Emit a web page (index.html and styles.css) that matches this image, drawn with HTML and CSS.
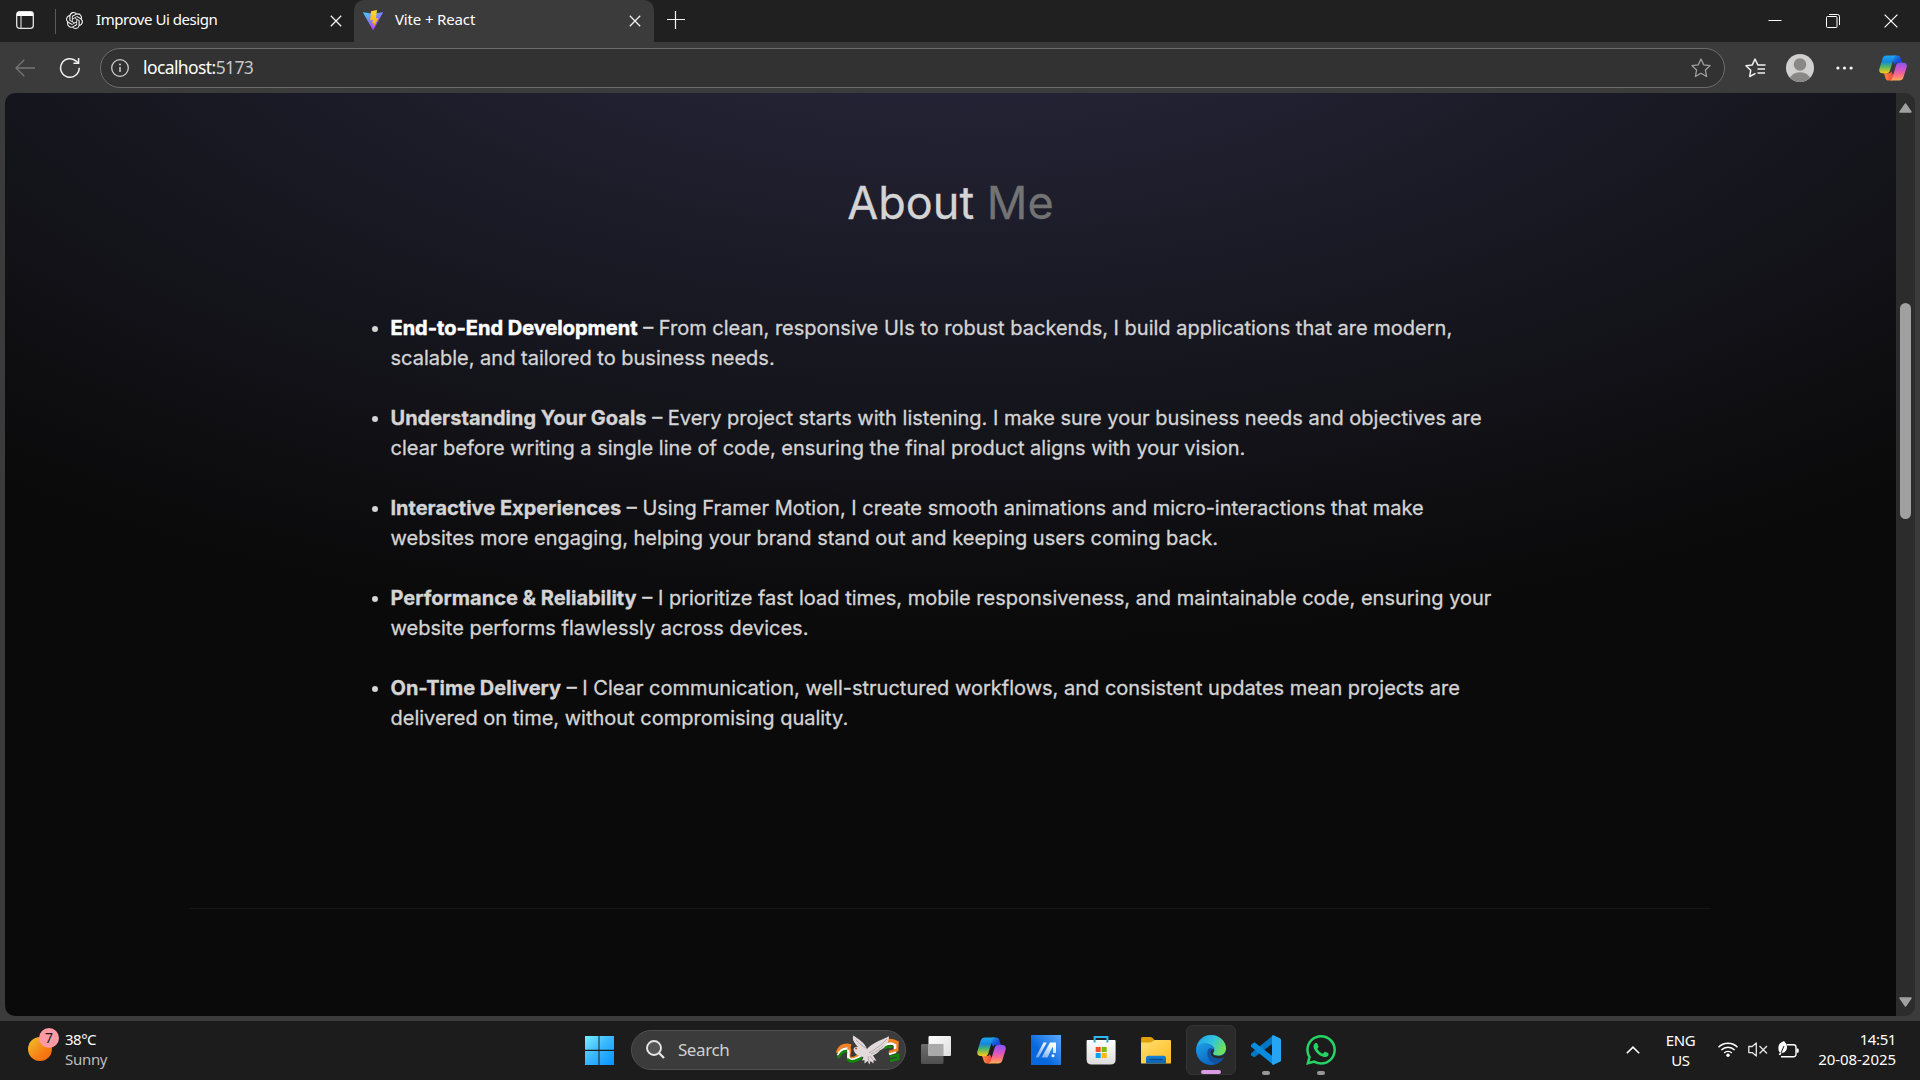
FILE: index.html
```html
<!DOCTYPE html>
<html lang="en">
<head>
<meta charset="utf-8">
<title>Vite + React</title>
<link rel="stylesheet" href="styles.css">
</head>
<body>
<svg class="defs" width="0" height="0" aria-hidden="true">
  <defs>
    <linearGradient id="cp-left" x1="0" y1="0" x2="0" y2="1"><stop offset="0" stop-color="#1ba8f0"/><stop offset=".35" stop-color="#1487dc"/><stop offset=".62" stop-color="#4fb56a"/><stop offset="1" stop-color="#ffcb12"/></linearGradient>
    <linearGradient id="cp-top" x1="0" y1="0" x2="1" y2="1"><stop offset="0" stop-color="#1f9df0"/><stop offset=".6" stop-color="#1749d6"/><stop offset="1" stop-color="#2a5be8"/></linearGradient>
    <linearGradient id="cp-right" x1="0" y1="0" x2="0" y2="1"><stop offset="0" stop-color="#8a55f0"/><stop offset=".4" stop-color="#d354c8"/><stop offset=".7" stop-color="#fb6f80"/><stop offset="1" stop-color="#ffae55"/></linearGradient>
    <linearGradient id="cp-bot" x1="0" y1="0" x2="1" y2="0"><stop offset="0" stop-color="#ff9b3d"/><stop offset="1" stop-color="#ee3f3f"/></linearGradient>
    <symbol id="copilot" viewBox="0 0 28 26">
      <path d="M15 .5h3.400c1.800 0 2.700 1 3.200 2.600L22.600 6.500c.3.900 1 1.200 2 1.200h-6.200c-1.500 0-2.300.7-2.700 2L13 4z" fill="url(#cp-top)"/>
      <path d="M13 25.500H9.600c-1.800 0-2.700-1-3.200-2.600L5.400 19.500c-.3-.9-1-1.200-2-1.200h6.200c1.500 0 2.300-.7 2.700-2L15 22z" fill="url(#cp-bot)"/>
      <path d="M7.800.5h9.400c-1.500.3-2.100 1.400-2.600 3l-3.700 12.300c-.5 1.600-1.400 2.500-3.100 2.500H3.500C.8 18.300-.3 16.300.4 13.800L3.500 3.700C4.200 1.600 5.500.5 7.800.5z" fill="url(#cp-left)"/>
      <path d="M20.200 25.500h-9.400c1.500-.3 2.100-1.400 2.600-3l3.700-12.300c.5-1.600 1.400-2.500 3.100-2.500h4.300c2.700 0 3.800 2 3.100 4.500l-3.100 10.100c-.7 2.100-2 3.200-4.300 3.200z" fill="url(#cp-right)"/>
    </symbol>
  </defs>
</svg>

<div class="desktop">
  <header class="tabbar">
    <div class="workspace">
      <svg width="18" height="18" viewBox="0 0 18 18"><rect x=".7" y=".7" width="16.600" height="16.600" rx="2.800" fill="none" stroke="#e4e4e4" stroke-width="1.300"/><path d="M1 5V3a2 2 0 0 1 2-2h12a2 2 0 0 1 2 2v2z" fill="#fff"/><path d="M5 5v12" stroke="#cfcfcf" stroke-width="1.200"/></svg>
    </div>
    <div class="tab">
      <svg class="favicon-ai" width="17" height="17" viewBox="0 0 24 24" fill="#f2f2f2"><path d="M22.2819 9.8211a5.9847 5.9847 0 0 0-.5157-4.9108 6.0462 6.0462 0 0 0-6.5098-2.9A6.0651 6.0651 0 0 0 4.9807 4.1818a5.9847 5.9847 0 0 0-3.9977 2.9 6.0462 6.0462 0 0 0 .7427 7.0966 5.98 5.98 0 0 0 .511 4.9107 6.051 6.051 0 0 0 6.5146 2.9001A5.9847 5.9847 0 0 0 13.2599 24a6.0557 6.0557 0 0 0 5.7718-4.2058 5.9894 5.9894 0 0 0 3.9977-2.9001 6.0557 6.0557 0 0 0-.7475-7.0729zm-9.022 12.6081a4.4755 4.4755 0 0 1-2.8764-1.0408l.1419-.0804 4.7783-2.7582a.7948.7948 0 0 0 .3927-.6813v-6.7369l2.02 1.1686a.071.071 0 0 1 .038.052v5.5826a4.504 4.504 0 0 1-4.4945 4.4944zm-9.6607-4.1254a4.4708 4.4708 0 0 1-.5346-3.0137l.142.0852 4.783 2.7582a.7712.7712 0 0 0 .7806 0l5.8428-3.3685v2.3324a.0804.0804 0 0 1-.0332.0615L9.74 19.9502a4.4992 4.4992 0 0 1-6.1408-1.6464zM2.3408 7.8956a4.485 4.485 0 0 1 2.3655-1.9728V11.6a.7664.7664 0 0 0 .3879.6765l5.8144 3.3543-2.0201 1.1685a.0757.0757 0 0 1-.071 0l-4.8303-2.7865A4.504 4.504 0 0 1 2.3408 7.872zm16.5963 3.8558L13.1038 8.364 15.1192 7.2a.0757.0757 0 0 1 .071 0l4.8303 2.7913a4.4944 4.4944 0 0 1-.6765 8.1042v-5.6772a.79.79 0 0 0-.407-.667zm2.0107-3.0231l-.142-.0852-4.7735-2.7818a.7759.7759 0 0 0-.7854 0L9.409 9.2297V6.8974a.0662.0662 0 0 1 .0284-.0615l4.8303-2.7866a4.4992 4.4992 0 0 1 6.6802 4.66zM8.3065 12.863l-2.02-1.1638a.0804.0804 0 0 1-.038-.0567V6.0742a4.4992 4.4992 0 0 1 7.3757-3.4537l-.142.0805L8.704 5.459a.7948.7948 0 0 0-.3927.6813zm1.0976-2.3654l2.602-1.4998 2.6069 1.4998v2.9994l-2.5974 1.4997-2.6067-1.4997Z"/></svg>
      <span class="tab-title">Improve Ui design</span>
      <svg class="tab-close" width="12" height="12" viewBox="0 0 12 12"><path d="M.8.8l10.400 10.400M11.200.8L.8 11.200" stroke="#f0f0f0" stroke-width="1.300"/></svg>
    </div>
    <div class="tab tab-active">
      <svg class="favicon-vite" width="20" height="20" viewBox="0 0 20 20">
        <defs><linearGradient id="v1" x1="0" y1="0" x2=".6" y2="1"><stop offset="0" stop-color="#41d1ff"/><stop offset="1" stop-color="#bd34fe"/></linearGradient><linearGradient id="v2" x1="0" y1="0" x2="0" y2="1"><stop offset="0" stop-color="#ffdd35"/><stop offset="1" stop-color="#ffa800"/></linearGradient></defs>
        <path d="M.3 2.200l9.500 1.500 9.900-1.500c.3 0 .4.300.2.600L10.400 19.700c-.2.300-.5.300-.7 0L.1 2.800c-.2-.3 0-.6.2-.6z" fill="url(#v1)"/><path d="M14 .1L8 1.300l-.8 9 2.700-.5-.8 3.700 2-.6-.8 4.500 5.100-9.300-2.500.4z" fill="url(#v2)"/></svg>
      <span class="tab-title title-vite">Vite + React</span>
      <svg class="tab-close" width="12" height="12" viewBox="0 0 12 12"><path d="M.8.8l10.400 10.400M11.200.8L.8 11.200" stroke="#f0f0f0" stroke-width="1.300"/></svg>
    </div>
    <svg class="new-tab" width="18" height="18" viewBox="0 0 18 18"><path d="M0 8.500h18M8.500 0v18" stroke="#f4f4f4" stroke-width="1.200"/></svg>
    <div class="window-controls">
      <svg width="14" height="14" viewBox="0 0 14 14"><path d="M.5 6.500h13" stroke="#fff"/></svg>
      <svg width="14" height="14" viewBox="0 0 14 14" fill="none" stroke="#fff"><rect x=".5" y="2.500" width="10.500" height="11" rx="1"/><path d="M3 .5h8.500a2 2 0 0 1 2 2V11"/></svg>
      <svg width="14" height="14" viewBox="0 0 14 14"><path d="M.6.6l12.800 12.800M13.400.6L.6 13.400" stroke="#fff" stroke-width="1.200"/></svg>
    </div>
  </header>

  <div class="toolbar">
    <svg class="back" width="20" height="18" viewBox="0 0 20 18" fill="none" stroke="#757575" stroke-width="1.300"><path d="M20 9H1M9.300.8L1 9l8.300 8.200"/></svg>
    <svg class="reload" width="22" height="22" viewBox="0 0 22 22" fill="none" stroke="#f1f1f1" stroke-width="1.500"><path d="M20.200 10.800a9.300 9.300 0 1 1-2.700-6.400L19.500 6"/><path d="M19.600 1v5.200h-5.200"/></svg>
    <div class="address">
      <svg width="18" height="18" viewBox="0 0 18 18"><circle cx="9" cy="9" r="8.300" fill="none" stroke="#cfcfcf" stroke-width="1.300"/><path d="M9 8v5" stroke="#cfcfcf" stroke-width="1.500"/><circle cx="9" cy="5.500" r="1" fill="#cfcfcf"/></svg>
      <span class="url">localhost:<span class="port">5173</span></span>
      <svg class="star" width="20" height="20" viewBox="0 0 20 20"><path d="M10 1l2.700 5.800 6.400.8-4.700 4.400 1.200 6.500L10 15.300l-5.600 3.200L5.600 12 .9 7.600l6.400-.8z" fill="none" stroke="#a0a0a0" stroke-width="1.300" stroke-linejoin="round"/></svg>
    </div>
    <svg class="favorites" width="21" height="20" viewBox="0 0 21 20" fill="none" stroke="#f1f1f1" stroke-width="1.500"><path d="M10.500 15.400l-5.800 3.100 1-6.200L1 7.700l6.300-.8L10 1l2.800 5.900h7.700M12.500 11H20M12.500 15H20" stroke-linejoin="round"/></svg>
    <svg class="avatar" width="28" height="28" viewBox="0 0 28 28"><defs><clipPath id="av"><circle cx="14" cy="14" r="14"/></clipPath></defs><g clip-path="url(#av)"><path fill="#d2d0ce" d="M0 0h28v28H0z"/><circle cx="14" cy="10.500" r="6.200" fill="#8a8886"/><ellipse cx="14" cy="25.500" rx="10" ry="7.300" fill="#8a8886"/></g></svg>
    <svg class="more" width="17" height="4" viewBox="0 0 17 4" fill="#f5f5f5"><circle cx="1.900" cy="2" r="1.600"/><circle cx="8.500" cy="2" r="1.600"/><circle cx="15.100" cy="2" r="1.600"/></svg>
    <svg class="copilot-btn" width="28" height="26"><use href="#copilot"/></svg>
  </div>

  <div class="frame">
    <div class="viewport">
      <main class="page">
        <section class="about">
          <h1>About <span>Me</span></h1>
          <ul>
            <li class="lit"><strong>End-to-End Development</strong> – From clean, responsive UIs to robust backends, I build applications that are modern,<br>scalable, and tailored to business needs.</li>
            <li><strong>Understanding Your Goals</strong> – Every project starts with listening. I make sure your business needs and objectives are<br>clear before writing a single line of code, ensuring the final product aligns with your vision.</li>
            <li><strong>Interactive Experiences</strong> – Using Framer Motion, I create smooth animations and micro-interactions that make<br>websites more engaging, helping your brand stand out and keeping users coming back.</li>
            <li><strong>Performance &amp; Reliability</strong> – I prioritize fast load times, mobile responsiveness, and maintainable code, ensuring your<br>website performs flawlessly across devices.</li>
            <li><strong>On-Time Delivery</strong> – I Clear communication, well-structured workflows, and consistent updates mean projects are<br>delivered on time, without compromising quality.</li>
          </ul>
        </section>
      </main>
      <div class="scrollbar">
        <svg width="13" height="10" viewBox="0 0 13 10"><path d="M6.500 1L12 9H1z" fill="#a0a0a0" stroke="#a0a0a0" stroke-width="1.500" stroke-linejoin="round"/></svg>
        <div class="thumb"></div>
        <svg width="13" height="10" viewBox="0 0 13 10"><path d="M6.500 9L12 1H1z" fill="#a0a0a0" stroke="#a0a0a0" stroke-width="1.500" stroke-linejoin="round"/></svg>
      </div>
    </div>
  </div>

  <footer class="taskbar">
    <div class="weather">
      <div class="sun"><span class="badge">7</span></div>
      <div class="weather-text"><span>38°C</span><span class="dim">Sunny</span></div>
    </div>
    <div class="apps">
      <div class="slot">
        <svg width="30" height="30" viewBox="0 0 30 30"><defs><linearGradient id="win" gradientUnits="userSpaceOnUse" x1="0" y1="0" x2="29" y2="29"><stop offset="0" stop-color="#7cf3ff"/><stop offset=".5" stop-color="#38b9ff"/><stop offset="1" stop-color="#0a94ff"/></linearGradient></defs><path fill="url(#win)" d="M1 1h13.500v13.800H1zM15.500 1H30v13.800H15.500zM1 15.900h13.500V30H1zM15.500 15.900H30V30H15.500z"/></svg>
      </div>
      <div class="search">
        <svg width="19" height="19" viewBox="0 0 19 19" fill="none" stroke="#e6e6e6" stroke-width="1.900"><circle cx="8" cy="8" r="7" fill="#555"/><path d="M13 13l5 5" stroke-width="2.300"/></svg>
        <span>Search</span>
        <svg class="dove" width="64" height="30" viewBox="0 0 64 30">
          <g fill="none">
            <path d="M1.500 18C4 10 9 9.500 15 11" stroke="#f58220" stroke-width="3.600"/><path d="M2 20.500C5 13.500 9 12.500 14 14" stroke="#fff" stroke-width="2.600"/><path d="M2 23C6 16 9 15.500 13 16.500" stroke="#138808" stroke-width="2.600"/>
            <path d="M12 12c5 4-2 9 2 11 4 1.500 8-2 11-4" stroke="#f58220" stroke-width="3"/><path d="M12 15c2 4-2 7 2 9.500 4 1 8-2 11-3" stroke="#fff" stroke-width="2.400"/><path d="M11.500 24c3 4.500 9 1.500 14-1" stroke="#138808" stroke-width="2.800"/>
            <path d="M47 8c4-3 9-3 14-.5l-.5 9" stroke="#f58220" stroke-width="3.500"/><path d="M48 11c4-3 8-3 11-1v7l-6 2" stroke="#fff" stroke-width="2.600"/><path d="M48 13c4-2 6-2 8-.500M54 22l8-2v4l-8 2" stroke="#138808" stroke-width="2.800"/><path d="M53 17l9-2.500" stroke="#f58220" stroke-width="2.500"/>
          </g>
          <path d="M17.500 14.500c.5-3 4-3.500 6-1.200C17.500 8 16 4 17.300.5c5 3.500 11.500 7 13.700 13.500C36 8 43 6 53 1.200c0 4-1 7-3.500 9 .5 1.500-3.500 4.500-5.500 5-2.500 3-4.500 4-7 5.300l3.500 5.500-3-1 0 3.500-3-2.500-1 3.500-2-3.500-3 2.500v-3.500l-2.500.5 1.500-3.500c-5-.5-9-3-10-7.500z" fill="#e2dada"/>
          <path d="M31 14c-4-3-8-5.500-11-9M33 18c6-4 12-7 18-14M35 19c5-2 9-5 12-8M32 21l1 6M34 21l3 4" stroke="#aaa2ad" stroke-width=".9" fill="none"/><circle cx="20" cy="13.500" r="1.100" fill="#c5541c"/>
        </svg>
      </div>
      <div class="slot">
        <svg width="30" height="30" viewBox="0 0 30 30"><defs><linearGradient id="tv1" x1="0" y1="0" x2="1" y2="1"><stop offset="0" stop-color="#fff"/><stop offset="1" stop-color="#ddd"/></linearGradient><linearGradient id="tv2" x1="0" y1="0" x2="0" y2="1"><stop offset="0" stop-color="#6e6e6e"/><stop offset="1" stop-color="#4f4f4f"/></linearGradient></defs><rect y="9" width="22.500" height="20" rx="1.200" fill="url(#tv2)"/><rect x="7.500" y="1" width="22.500" height="20" rx="1" fill="url(#tv1)"/><path d="M7.500 9h15v12h-15z" fill="#aaa"/></svg>
      </div>
      <div class="slot"><svg width="29" height="27"><use href="#copilot"/></svg></div>
      <div class="slot">
        <svg width="30" height="30" viewBox="0 0 30 30"><defs><linearGradient id="my" x1=".3" y1=".6" x2="1" y2="0"><stop offset="0" stop-color="#0867dd"/><stop offset="1" stop-color="#5baaff"/></linearGradient><linearGradient id="my2" x1="0" y1="1" x2=".6" y2="0"><stop offset="0" stop-color="#fff" stop-opacity=".35"/><stop offset="1" stop-color="#fff"/></linearGradient></defs><path fill="url(#my)" d="M0 0h30v30H0z"/><path fill="url(#my2)" d="M4.500 22.500L12.500 7.500h3.200L7.700 22.500zM10.500 22.500L19 7.500h6v10.500h-3v-6.500l-2.200 4-3.300 7z"/><circle cx="22" cy="20.800" r="1.500" fill="#fff"/></svg>
      </div>
      <div class="slot">
        <svg width="30" height="30" viewBox="0 0 30 30"><path d="M8.600 7V2h12.800v5" fill="none" stroke="#2fb9ee" stroke-width="2"/><defs><linearGradient id="st" x1="0" y1="0" x2="0" y2="1"><stop offset="0" stop-color="#fff"/><stop offset="1" stop-color="#dcdcdc"/></linearGradient></defs><path d="M.6 6q0-1 1-1h27q1 0 1 1v18.500q0 5-5 5h-19q-5 0-5-5z" fill="url(#st)"/><path d="M8.600 7.500V5M21.400 7.500V5" stroke="#2fa5dd" stroke-width="2"/><path fill="#f25022" d="M9.700 12h5v5h-5z"/><path fill="#7fba00" d="M15.700 12h5v5h-5z"/><path fill="#00a4ef" d="M9.700 18h5v5h-5z"/><path fill="#ffb900" d="M15.700 18h5v5h-5z"/></svg>
      </div>
      <div class="slot">
        <svg width="30" height="30" viewBox="0 0 30 30"><defs><linearGradient id="fo" x1="0" y1="0" x2="1" y2="1"><stop offset="0" stop-color="#ffdf74"/><stop offset="1" stop-color="#fdbb1d"/></linearGradient><linearGradient id="fb" x1="0" y1="0" x2="0" y2="1"><stop offset="0" stop-color="#1583d8"/><stop offset="1" stop-color="#0b60ae"/></linearGradient></defs><path d="M0 3.500Q0 2 1.500 2h8q1 0 1.800.8L13.500 5 10 9H0z" fill="#dfa00a"/><path d="M0 8.500q0-1 1-1h8.500q1 0 1.800-.8l1-.9q.8-.8 1.800-.8H29q1 0 1 1v22.500H0z" fill="url(#fo)"/><path d="M5 28.500V23q0-2.200 2.200-2.200h15.600Q25 20.800 25 23v5.500z" fill="url(#fb)"/><path d="M8.500 24.500h13" stroke="#0c4a87" stroke-width="1.200"/></svg>
      </div>
      <div class="slot">
        <div class="running">
        <svg width="30" height="30" viewBox="0 0 30 30"><defs><linearGradient id="e1" x1="0" y1=".2" x2="1" y2=".6"><stop offset="0" stop-color="#23a3e4"/><stop offset=".5" stop-color="#31c3df"/><stop offset="1" stop-color="#74e44f"/></linearGradient><linearGradient id="e2" x1="0" y1="0" x2=".5" y2="1"><stop offset="0" stop-color="#1f9fe6"/><stop offset="1" stop-color="#0a6ac4"/></linearGradient></defs>
        <circle cx="15" cy="15" r="14.900" fill="#0a6cc8"/><path d="M.4 13C1.500 5.500 7.500.1 15 .1 23.500.1 30 6.500 30 13.200c0 4.600-3.500 7.400-8 7.400-3.200 0-4.800-1-4.800-2 0-.9 1.300-1.400 1.300-3.600 0-3.400-4-6.500-9-6.500-4 0-7.300 1.700-9.100 4.500z" fill="url(#e1)"/><path d="M.3 13.200C2 9.500 6 7.700 10 8.300c4.300.5 7.500 3.500 7.500 6.500-2-3-6.500-1.500-6.500 4 0 5 3.600 9.300 8.500 10.200A15 15 0 0 1 .1 15z" fill="url(#e2)"/><path d="M14 12.800c-4 2.500-3.500 13.200 5 16.300 4-.8 7.500-3.500 9-6.600-4 2.500-12.700 1.900-14-3.500-.6-2.500.1-4.900 2.200-5.500z" fill="#11519d"/><path d="M17.700 14.500c.5 2-1.200 3-.8 4.200.5 1.700 3 2.200 5.500 2.200 3 0 5-1 7.600-4v12h-2l.5-6.600c-4 2.500-12.700 1.900-14-3.500-.6-2.500.7-5.100 3.200-4.300z" fill="#202020" class="edge-cut"/></svg>
        <i class="pill"></i></div>
      </div>
      <div class="slot with-dot">
        <svg width="30" height="30" viewBox="0 0 30 30"><path d="M22.500 0v8L3.500 22.200 0 20.600v-2.400z" fill="#0076c6"/><path d="M0 9.800l3.500-2.500L22.500 22v8L0 11.800z" fill="#0a8bdd"/><path d="M22 0l7 3.200q1 .5 1 1.600v20.400q0 1.100-1 1.600L22 30q-1-.6-1-2V2q0-1.400 1-2z" fill="#27a5f2"/></svg>
        <i class="dot"></i>
      </div>
      <div class="slot with-dot">
        <svg width="30" height="30" viewBox="0 0 24 24" fill="#25d366"><path d="M17.472 14.382c-.297-.149-1.758-.867-2.03-.967-.273-.099-.471-.148-.67.15-.197.297-.767.966-.94 1.164-.173.199-.347.223-.644.075-.297-.15-1.255-.463-2.39-1.475-.883-.788-1.48-1.761-1.653-2.059-.173-.297-.018-.458.13-.606.134-.133.298-.347.446-.52.149-.174.198-.298.298-.497.099-.198.05-.371-.025-.52-.075-.149-.669-1.612-.916-2.207-.242-.579-.487-.5-.669-.51-.173-.008-.371-.01-.57-.01-.198 0-.52.074-.792.372-.272.297-1.04 1.016-1.04 2.479 0 1.462 1.065 2.875 1.213 3.074.149.198 2.096 3.2 5.077 4.487.709.306 1.262.489 1.694.625.712.227 1.36.195 1.871.118.571-.085 1.758-.719 2.006-1.413.248-.694.248-1.289.173-1.413-.074-.124-.272-.198-.57-.347m-5.421 7.403h-.004a9.87 9.87 0 01-5.031-1.378l-.361-.214-3.741.982.998-3.648-.235-.374a9.86 9.86 0 01-1.51-5.26c.001-5.45 4.436-9.884 9.888-9.884 2.64 0 5.122 1.03 6.988 2.898a9.825 9.825 0 012.893 6.994c-.003 5.45-4.437 9.884-9.885 9.884m8.413-18.297A11.815 11.815 0 0012.05 0C5.495 0 .16 5.335.157 11.892c0 2.096.547 4.142 1.588 5.945L.057 24l6.305-1.654a11.882 11.882 0 005.683 1.448h.005c6.554 0 11.89-5.335 11.893-11.893a11.821 11.821 0 00-3.48-8.413Z"/></svg>
        <i class="dot"></i>
      </div>
    </div>
    <div class="tray">
      <svg class="chevron" width="14" height="8" viewBox="0 0 14 8"><path d="M.8 7.300L7 1.200l6.200 6.100" fill="none" stroke="#fff" stroke-width="1.600"/></svg>
      <div class="lang"><span>ENG</span><span>US</span></div>
      <div class="status">
      <svg width="20" height="15" viewBox="0 0 20 15" fill="none" stroke="#fff" stroke-width="1.400"><path d="M.5 5.300a13.300 13.300 0 0 1 19 0M3.300 8.100a9.400 9.400 0 0 1 13.400 0M6.200 10.900a5.400 5.400 0 0 1 7.600 0"/><circle cx="10" cy="13.200" r="1.700" fill="#fff" stroke="none"/></svg>
      <svg width="20" height="15" viewBox="0 0 20 15" fill="none" stroke="#e8e8e8" stroke-width="1.300"><path d="M8.300 1v13L4.200 10.600H.8V4.500h3.400zM11.500 4l7.500 7.500M19 4l-7.500 7.500" stroke-linejoin="round"/></svg>
      <svg width="21" height="17" viewBox="0 0 21 17"><path d="M9 3.700h6.500a2.500 2.500 0 0 1 2.500 2.500v7a2.500 2.500 0 0 1-2.500 2.500H3" fill="none" stroke="#fff" stroke-width="1.400"/><path d="M18.500 7.500h1.300q.9 0 .9 1v2.300q0 1-.9 1h-1.300zM6 0C1.500 1.800.3 4 .4 7.500c0 2 .8 3.500 1.600 4L.7 14h1.800l1-2c3.800 0 5.700-3 5.500-6.500C8.900 3 7.500 1.500 6 0z" fill="#fff"/><path d="M3 12l3-7" stroke="#1c1c1c"/></svg>
      </div>
      <div class="clock"><span>14:51</span><span class="date">20-08-2025</span></div>
    </div>
  </footer>
</div>
</body>
</html>
```
FILE: styles.css
```css
* { box-sizing: border-box; }
body { margin: 0; background: #3b3b3b; font-family: "Noto Sans", "Open Sans", sans-serif; color: #fff; overflow: hidden; }
svg { display: block; flex: none; }
.defs { position: absolute; }
.desktop { width: 1920px; height: 1080px; display: flex; flex-direction: column; }

.tabbar { height: 42px; flex: none; background: #202020; display: flex; align-items: stretch; }
.workspace { width: 56px; padding: 11px 0 0 16px; border-right: 1px solid #5b5b5b; height: 34px; clip-path: inset(9px 0 0 0); }
.tab { display: flex; align-items: center; width: 298px; padding: 0 12px 2px 10px; font-size: 15px; }
.tab-title { flex: 1; white-space: nowrap; letter-spacing: -.45px; line-height: 20px; margin-bottom: 2px; }
.title-vite { letter-spacing: -.15px; }
.favicon-ai { margin-right: 13px; }
.tab-active { width: 300px; background: #3b3b3b; border-radius: 10px 10px 0 0; padding: 0 13px 2px 9px; }
.favicon-vite { margin-right: 12px; }
.tab-close { margin-top: 2px; }
.new-tab { margin: 11px 0 0 13px; }
.window-controls { margin-left: auto; display: flex; gap: 44px; padding: 14px 22px 0 0; }

.toolbar { height: 51px; flex: none; display: flex; align-items: center; padding-left: 15px; }
.reload { margin-left: 24px; }
.address { margin: 0 0 0 19px; width: 1625px; height: 40px; border: 1px solid #6d6d6d; border-radius: 20px; background: #323232; display: flex; align-items: center; padding: 0 13px 0 10px; }
.url { margin: 0 0 2px 14px; font-size: 17.500px; flex: 1; letter-spacing: -.6px; line-height: 22px; }
.port { color: #c8c8c8; }
.favorites { margin-left: 20px; }
.avatar { margin-left: 20px; }
.more { margin-left: 22px; }
.copilot-btn { margin-left: 26px; }

.frame { height: 928px; flex: none; padding: 0 5px 5px; }
.viewport { height: 923px; display: flex; border-radius: 10px; overflow: hidden; }
.page { flex: 1; padding: 0 185px; background: radial-gradient(ellipse 80% 80% at 50% -20%, rgba(120, 119, 198, .3), rgba(255, 255, 255, 0)), #0a0a0a; }
.about { height: 816px; border-bottom: 1px solid #171717; font-family: Inter, sans-serif; color: #d4d4d4; }
h1 { margin: 0; padding-top: 85px; font-size: 45px; line-height: 50px; font-weight: 400; text-align: center; -webkit-text-stroke: .3px; }
h1 span { color: #737373; }
ul { width: 1120px; margin: 85px auto 0; padding: 0; list-style: disc; font-size: 20px; line-height: 30px; white-space: nowrap; -webkit-text-stroke: .3px; }
li { margin-bottom: 30px; }
strong { font-weight: 700; }
.lit strong { color: #fff; -webkit-text-stroke: .5px; }
.scrollbar { width: 19px; background: #2c2c2c; display: flex; flex-direction: column; align-items: center; padding: 10px 0 9px; }
.thumb { width: 11px; height: 216px; margin: 190px 0 auto; border-radius: 6px; background: #a0a0a0; }

.taskbar { flex: 1; background: #1c1c1c; display: grid; grid-template-columns: 1fr 776px 1fr; font-size: 15px; line-height: 20px; }
.weather { display: flex; padding: 8px 0 0 28px; }
.sun { position: relative; width: 24px; height: 24px; margin-top: 8px; border-radius: 50%; background: linear-gradient(135deg, #edc531, #f77f14 60%, #f5640e); }
.badge { position: absolute; left: 11px; top: -9px; width: 20px; height: 20px; border-radius: 50%; background: #ff99a4; color: #1b1b1b; font-size: 14px; line-height: 20px; text-align: center; }
.weather-text { display: flex; flex-direction: column; margin-left: 13px; letter-spacing: -.5px; }
.dim { color: #bcbcbc; letter-spacing: -.3px; }
.apps { display: flex; align-items: center; }
.slot { width: 54.900px; height: 59px; padding-bottom: 1px; display: flex; justify-content: center; align-items: center; position: relative; }
.search { width: 275px; height: 40px; margin: 0 3px 2px 4px; border-radius: 20px; background: #3b3b3b; border: 1px solid #505050; display: flex; align-items: center; padding: 0 5px 0 14px; font-size: 17px; color: #d0d0d0; flex: none; }
.search span { margin-left: 13px; flex: 1; letter-spacing: -.4px; }
.running { width: 50px; height: 50px; margin-left: 1px; border-radius: 6px; background: #2a2a2a; border: 1px solid #333; display: grid; place-items: center; position: relative; }
.edge-cut { fill: #2a2a2a; }
.pill { position: absolute; left: 14px; bottom: 0; width: 20px; height: 4px; border-radius: 2px; background: #d99be3; }
.dot { position: absolute; left: 23.500px; bottom: 5px; width: 8px; height: 4px; border-radius: 2px; background: #979797; }
.tray { display: flex; justify-content: flex-end; padding-right: 24px; }
.tray span { display: block; }
.chevron { margin-top: 25px; }
.lang { margin: 9px 0 0 22px; width: 37px; text-align: center; letter-spacing: -.4px; }
.status { display: flex; gap: 10px; align-items: center; margin: 0 0 2px 19px; height: 56px; }
.clock { margin: 8px 0 0 16px; width: 81px; text-align: right; letter-spacing: -.4px; white-space: nowrap; }
.date { letter-spacing: -.05px; }
```
